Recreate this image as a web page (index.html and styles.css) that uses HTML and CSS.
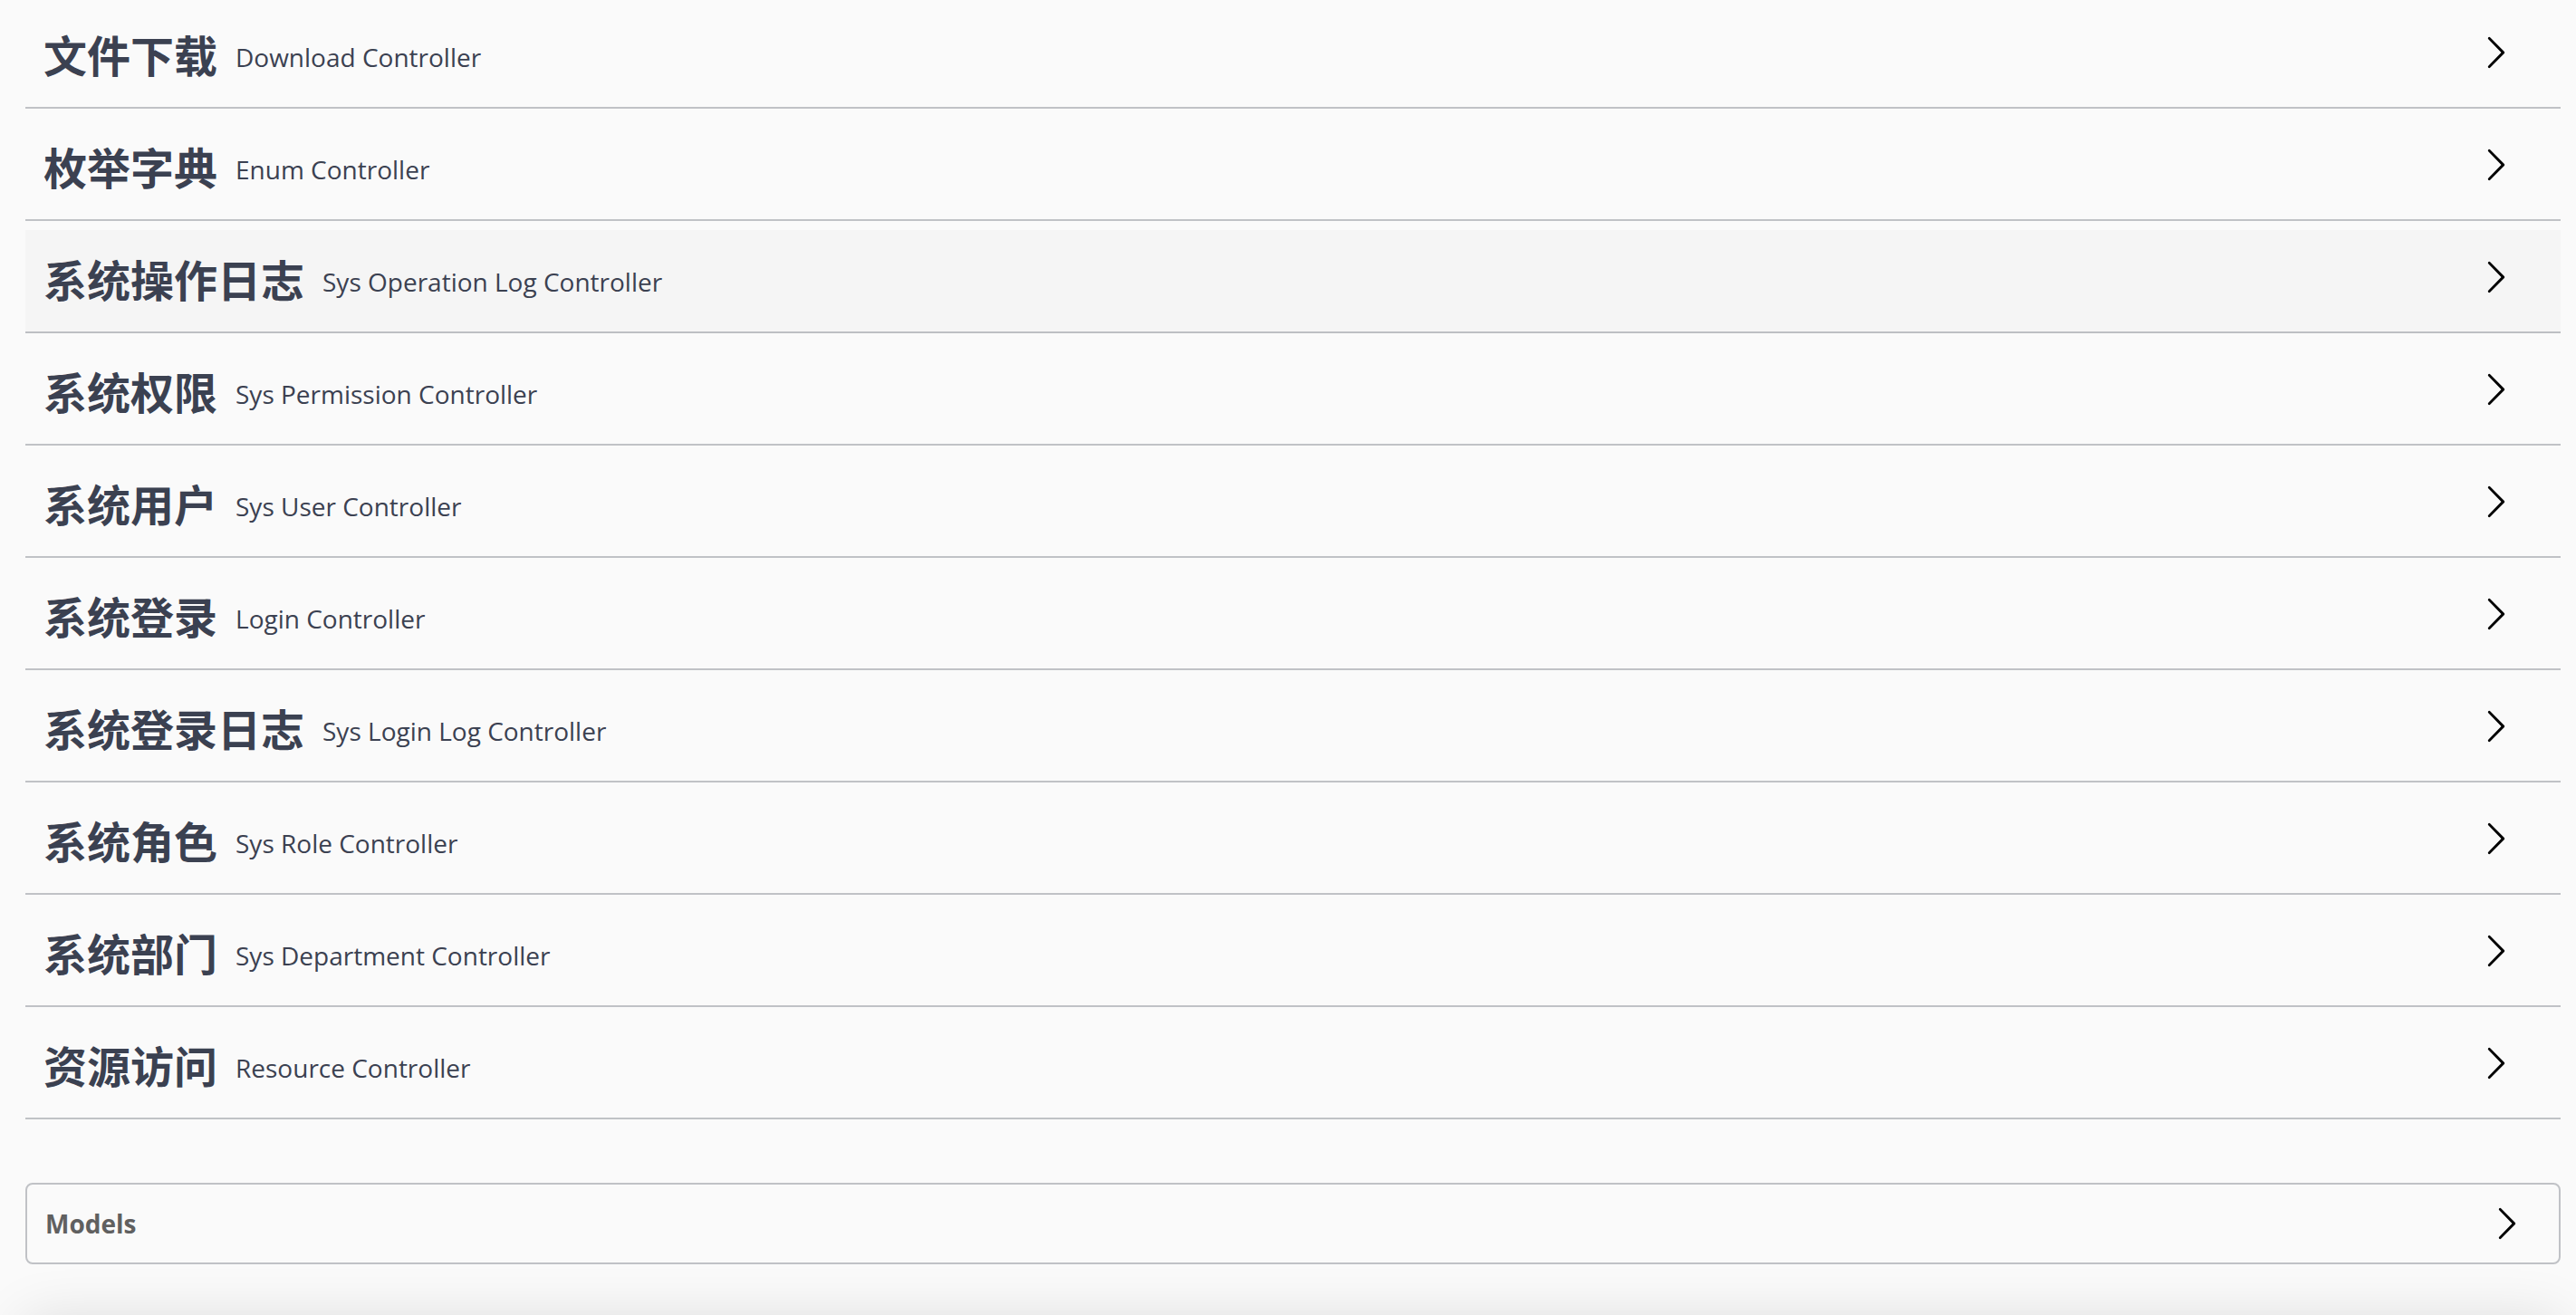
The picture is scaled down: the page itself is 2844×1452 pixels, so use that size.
FILE: index.html
```html
<!DOCTYPE html>
<html lang="zh-CN">
<head>
    <meta charset="UTF-8">
    <meta name="viewport" content="width=device-width, initial-scale=1.0">
    <title>API 文档</title>
    <link rel="stylesheet" href="styles.css">
</head>
<body>
    <div class="wrapper">
        <!-- 接口分组 -->
        <div class="tag-list">
            <div class="tag-row">
                <span class="tag-name">文件下载</span>
                <small class="tag-desc">Download Controller</small>
                <svg class="arrow" viewBox="0 0 20 20"><path d="M13.25 10L6.109 2.58a.697.697 0 0 1 0-.979.68.68 0 0 1 .969 0l7.83 7.908a.697.697 0 0 1 0 .979l-7.83 7.908a.68.68 0 0 1-.969 0 .697.697 0 0 1 0-.979L13.25 10z"/></svg>
            </div>
            <div class="tag-row">
                <span class="tag-name">枚举字典</span>
                <small class="tag-desc">Enum Controller</small>
                <svg class="arrow" viewBox="0 0 20 20"><path d="M13.25 10L6.109 2.58a.697.697 0 0 1 0-.979.68.68 0 0 1 .969 0l7.83 7.908a.697.697 0 0 1 0 .979l-7.83 7.908a.68.68 0 0 1-.969 0 .697.697 0 0 1 0-.979L13.25 10z"/></svg>
            </div>
            <div class="tag-row is-hover">
                <span class="tag-name">系统操作日志</span>
                <small class="tag-desc">Sys Operation Log Controller</small>
                <svg class="arrow" viewBox="0 0 20 20"><path d="M13.25 10L6.109 2.58a.697.697 0 0 1 0-.979.68.68 0 0 1 .969 0l7.83 7.908a.697.697 0 0 1 0 .979l-7.83 7.908a.68.68 0 0 1-.969 0 .697.697 0 0 1 0-.979L13.25 10z"/></svg>
            </div>
            <div class="tag-row">
                <span class="tag-name">系统权限</span>
                <small class="tag-desc">Sys Permission Controller</small>
                <svg class="arrow" viewBox="0 0 20 20"><path d="M13.25 10L6.109 2.58a.697.697 0 0 1 0-.979.68.68 0 0 1 .969 0l7.83 7.908a.697.697 0 0 1 0 .979l-7.83 7.908a.68.68 0 0 1-.969 0 .697.697 0 0 1 0-.979L13.25 10z"/></svg>
            </div>
            <div class="tag-row">
                <span class="tag-name">系统用户</span>
                <small class="tag-desc">Sys User Controller</small>
                <svg class="arrow" viewBox="0 0 20 20"><path d="M13.25 10L6.109 2.58a.697.697 0 0 1 0-.979.68.68 0 0 1 .969 0l7.83 7.908a.697.697 0 0 1 0 .979l-7.83 7.908a.68.68 0 0 1-.969 0 .697.697 0 0 1 0-.979L13.25 10z"/></svg>
            </div>
            <div class="tag-row">
                <span class="tag-name">系统登录</span>
                <small class="tag-desc">Login Controller</small>
                <svg class="arrow" viewBox="0 0 20 20"><path d="M13.25 10L6.109 2.58a.697.697 0 0 1 0-.979.68.68 0 0 1 .969 0l7.83 7.908a.697.697 0 0 1 0 .979l-7.83 7.908a.68.68 0 0 1-.969 0 .697.697 0 0 1 0-.979L13.25 10z"/></svg>
            </div>
            <div class="tag-row">
                <span class="tag-name">系统登录日志</span>
                <small class="tag-desc">Sys Login Log Controller</small>
                <svg class="arrow" viewBox="0 0 20 20"><path d="M13.25 10L6.109 2.58a.697.697 0 0 1 0-.979.68.68 0 0 1 .969 0l7.83 7.908a.697.697 0 0 1 0 .979l-7.83 7.908a.68.68 0 0 1-.969 0 .697.697 0 0 1 0-.979L13.25 10z"/></svg>
            </div>
            <div class="tag-row">
                <span class="tag-name">系统角色</span>
                <small class="tag-desc">Sys Role Controller</small>
                <svg class="arrow" viewBox="0 0 20 20"><path d="M13.25 10L6.109 2.58a.697.697 0 0 1 0-.979.68.68 0 0 1 .969 0l7.83 7.908a.697.697 0 0 1 0 .979l-7.83 7.908a.68.68 0 0 1-.969 0 .697.697 0 0 1 0-.979L13.25 10z"/></svg>
            </div>
            <div class="tag-row">
                <span class="tag-name">系统部门</span>
                <small class="tag-desc">Sys Department Controller</small>
                <svg class="arrow" viewBox="0 0 20 20"><path d="M13.25 10L6.109 2.58a.697.697 0 0 1 0-.979.68.68 0 0 1 .969 0l7.83 7.908a.697.697 0 0 1 0 .979l-7.83 7.908a.68.68 0 0 1-.969 0 .697.697 0 0 1 0-.979L13.25 10z"/></svg>
            </div>
            <div class="tag-row">
                <span class="tag-name">资源访问</span>
                <small class="tag-desc">Resource Controller</small>
                <svg class="arrow" viewBox="0 0 20 20"><path d="M13.25 10L6.109 2.58a.697.697 0 0 1 0-.979.68.68 0 0 1 .969 0l7.83 7.908a.697.697 0 0 1 0 .979l-7.83 7.908a.68.68 0 0 1-.969 0 .697.697 0 0 1 0-.979L13.25 10z"/></svg>
            </div>
        </div>

        <!-- 模型 -->
        <section class="models">
            <h4>
                <span>Models</span>
                <svg class="arrow" viewBox="0 0 20 20"><path d="M13.25 10L6.109 2.58a.697.697 0 0 1 0-.979.68.68 0 0 1 .969 0l7.83 7.908a.697.697 0 0 1 0 .979l-7.83 7.908a.68.68 0 0 1-.969 0 .697.697 0 0 1 0-.979L13.25 10z"/></svg>
            </h4>
        </section>

        <div class="page-foot"></div>
    </div>
</body>
</html>
```

FILE: styles.css
```css
/* 全局 */
body {
    margin: 0;
    background: #fafafa;
    color: #3b4151;
    font-family: "Open Sans", "Noto Sans CJK SC", sans-serif;
    overflow: hidden;
}

.wrapper {
    padding: 6px 17px 0 28px;
}

/* 接口分组行 */
.tag-row {
    display: flex;
    align-items: center;
    height: 72px;
    padding: 20px 52px 20px 20px;
    margin-bottom: 10px;
    border-bottom: 2px solid rgba(59, 65, 81, 0.3);
    cursor: pointer;
}
.tag-row.is-hover {
    background: rgba(0, 0, 0, 0.02);
}
.tag-name {
    padding-bottom: 6px;
    font-family: "Noto Sans CJK SC", sans-serif;
    font-size: 48px;
    font-weight: 700;
    color: #3b4151;
}
.tag-desc {
    flex: 1;
    padding: 2px 20px 0;
    font-family: "Open Sans", sans-serif;
    font-size: 28px;
    color: #3b4151;
}
.arrow {
    width: 40px;
    height: 40px;
    fill: #000;
    flex: none;
}
.tag-row .arrow {
    margin-top: -8px;
}

/* Models */
.models {
    margin-top: 70px;
    border: 2px solid rgba(59, 65, 81, 0.3);
    border-radius: 8px;
    position: relative;
    z-index: 1;
}
.models h4 {
    display: flex;
    align-items: center;
    justify-content: space-between;
    height: 46px;
    margin: 0;
    padding: 20px 38px 20px 20px;
    font-family: "Open Sans", sans-serif;
    font-size: 28px;
    font-weight: 700;
    color: #606060;
}

/* 底部阴影 */
.page-foot {
    margin-top: 64px;
    height: 200px;
    background: #fafafa;
    box-shadow: 0 0 60px rgba(0, 0, 0, 0.14);
}
```
